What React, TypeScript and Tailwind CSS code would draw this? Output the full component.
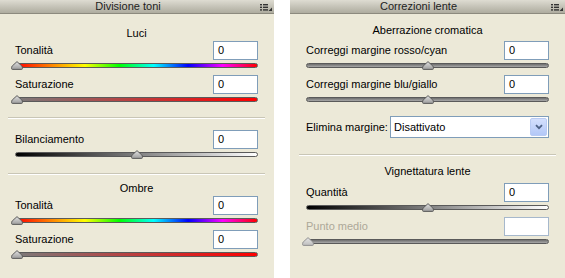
import React from "react";

const hue =
  "linear-gradient(to right, #ff0000, #ff8000, #ffff00, #00ff00, #00ffff, #0000ff, #ff00ff, #ff0000)";

function MenuIcon() {
  return (
    <svg width="12" height="7" viewBox="0 0 12 7" className="shrink-0">
      <rect x="0" y="0" width="2" height="1.4" fill="#333" />
      <rect x="3" y="0" width="5" height="1.4" fill="#333" />
      <rect x="0" y="2.6" width="2" height="1.4" fill="#333" />
      <rect x="3" y="2.6" width="5" height="1.4" fill="#333" />
      <rect x="0" y="5.2" width="2" height="1.4" fill="#333" />
      <rect x="3" y="5.2" width="5" height="1.4" fill="#333" />
      <polygon points="12,3.5 12,7 8.5,7" fill="#333" />
    </svg>
  );
}

function Header({ title }: { title: string }) {
  return (
    <div className="relative h-[14px] shrink-0 bg-gradient-to-b from-[#dedcd2] to-[#aeac9f] border-b border-[#8c8a7e] flex items-center justify-center pr-[18px]">
      <span className="text-[11px] leading-none text-[#222]">{title}</span>
      <div className="absolute right-[2px] top-[4px]">
        <MenuIcon />
      </div>
    </div>
  );
}

function Thumb({ disabled }: { disabled?: boolean }) {
  return (
    <svg width="12" height="9" viewBox="0 0 12 9">
      <defs>
        <linearGradient id={disabled ? "thd" : "th"} x1="0" y1="0" x2="0" y2="1">
          <stop offset="0" stopColor={disabled ? "#e6e6e6" : "#e2e2e2"} />
          <stop offset="1" stopColor={disabled ? "#bdbdbd" : "#9c9c9c"} />
        </linearGradient>
      </defs>
      <path
        d="M6 0.6 L10.8 5 Q11.4 5.6 11.4 6.6 L11.4 7.6 Q11.4 8.4 10.6 8.4 L1.4 8.4 Q0.6 8.4 0.6 7.6 L0.6 6.6 Q0.6 5.6 1.2 5 Z"
        fill={`url(#${disabled ? "thd" : "th"})`}
        stroke={disabled ? "#8a8a8a" : "#505050"}
        strokeWidth="0.9"
      />
    </svg>
  );
}

function Slider({ bg, pos, disabled }: { bg: string; pos: number; disabled?: boolean }) {
  return (
    <div className="relative h-[11px]">
      <div
        className="absolute left-0 right-0 top-[3px] h-[5px] rounded-full border border-[#5a5a5a]"
        style={{ background: bg }}
      />
      <div
        className="absolute top-[1px] -translate-x-1/2"
        style={{ left: `calc(2px + ${pos} * (100% - 4px))` }}
      >
        <Thumb disabled={disabled} />
      </div>
    </div>
  );
}

function Field({ value, disabled }: { value: string; disabled?: boolean }) {
  return (
    <div
      className={
        "w-[45px] h-[19px] bg-white border flex items-center pl-[4px] text-[11px] text-black " +
        (disabled ? "border-[#a6b8cc] bg-[#ece9d8]" : "border-[#7f9db9]")
      }
    >
      {value}
    </div>
  );
}

function Row({
  label,
  bg,
  pos,
  disabled,
  className,
}: {
  label: string;
  bg: string;
  pos: number;
  disabled?: boolean;
  className?: string;
}) {
  return (
    <div className={className}>
      <div className="flex items-center justify-between h-[19px]">
        <span className={"text-[11px] " + (disabled ? "text-[#aca899]" : "text-black")}>{label}</span>
        <Field value={disabled ? "" : "0"} disabled={disabled} />
      </div>
      <Slider bg={bg} pos={pos} disabled={disabled} />
    </div>
  );
}

function Title({ text, className }: { text: string; className?: string }) {
  return <div className={"h-[14px] text-center text-[11px] leading-[14px] text-black " + className}>{text}</div>;
}

function Divider({ className }: { className?: string }) {
  return <div className={"mx-[-7px] h-[2px] border-t border-[#c9c6b6] border-b-white border-b " + className} />;
}

export default function App() {
  const sat = "linear-gradient(to right, #7a7a7a, #ff0000)";
  const bw = "linear-gradient(to right, #000000, #ffffff)";
  const gray = "linear-gradient(to bottom, #6e6e6e, #a8a8a8)";

  return (
    <div
      className="flex w-[565px] h-[278px] bg-white gap-[16px] overflow-hidden"
      style={{ fontFamily: "Tahoma, 'Liberation Sans', Arial, sans-serif" }}
    >
      <div className="w-[274px] h-full bg-[#ece9d8] flex flex-col">
        <Header title="Divisione toni" />
        <div className="flex flex-col pl-[15px] pr-[16px]">
          <Title text="Luci" className="mt-[12px]" />
          <Row label="Tonalità" bg={hue} pos={0} className="mt-[1px]" />
          <Row label="Saturazione" bg={sat} pos={0} className="mt-[4px]" />
          <Divider className="mt-[12px]" />
          <Row label="Bilanciamento" bg={bw} pos={0.5} className="mt-[11px]" />
          <Divider className="mt-[13px]" />
          <Title text="Ombre" className="mt-[6px]" />
          <Row label="Tonalità" bg={hue} pos={0} className="mt-[1px]" />
          <Row label="Saturazione" bg={sat} pos={0} className="mt-[4px]" />
        </div>
      </div>

      <div className="flex-1 h-full bg-[#ece9d8] flex flex-col">
        <Header title="Correzioni lente" />
        <div className="flex flex-col pl-[16px] pr-[16px]">
          <Title text="Aberrazione cromatica" className="mt-[9px]" />
          <Row label="Correggi margine rosso/cyan" bg={gray} pos={0.5} className="mt-[4px]" />
          <Row label="Correggi margine blu/giallo" bg={gray} pos={0.5} className="mt-[4px]" />
          <div className="flex items-center mt-[11px] h-[22px]">
            <span className="text-[11px] text-black w-[84px]">Elimina margine:</span>
            <div className="flex-1 h-full bg-white border border-[#7f9db9] flex items-center">
              <span className="flex-1 pl-[3px] text-[11px] text-black">Disattivato</span>
              <div className="w-[17px] h-[18px] mr-[1px] rounded-[2px] bg-gradient-to-b from-[#d4e0fd] to-[#b3c8f7] border border-[#b9cbf3] flex items-center justify-center">
                <svg width="8" height="6" viewBox="0 0 8 6">
                  <path d="M1 1.2 L4 4.2 L7 1.2" fill="none" stroke="#4d6185" strokeWidth="1.8" />
                </svg>
              </div>
            </div>
          </div>
          <Divider className="mt-[16px]" />
          <Title text="Vignettatura lente" className="mt-[8px]" />
          <Row label="Quantità" bg={bw} pos={0.5} className="mt-[5px]" />
          <Row label="Punto medio" bg={gray} pos={0} disabled className="mt-[4px]" />
        </div>
      </div>
    </div>
  );
}
